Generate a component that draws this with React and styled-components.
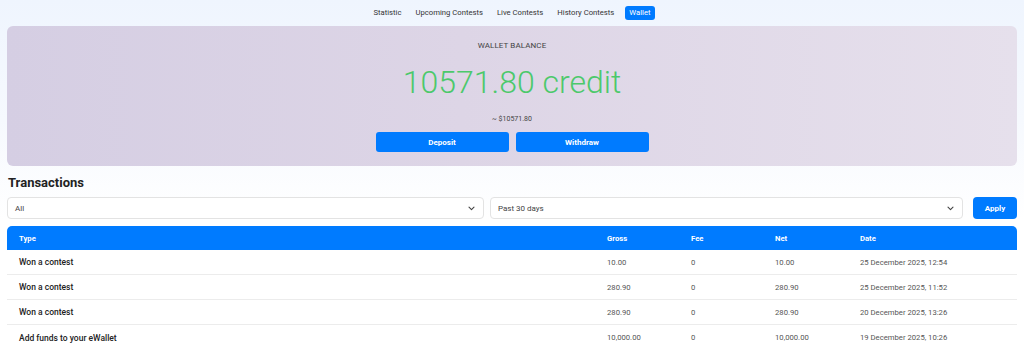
import React from "react";
import styled, { createGlobalStyle } from "styled-components";

const Global = createGlobalStyle`
  html, body { margin: 0; padding: 0; }
  body {
    font-family: Roboto, "Liberation Sans", Arial, sans-serif;
    background: linear-gradient(180deg, #eff5fe 0px, #f6f9fe 120px, #ffffff 220px);
    min-height: 357px;
    color: #222;
  }
`;

const Page = styled.div`
  padding: 0 7px;
`;

const Nav = styled.nav`
  display: flex;
  justify-content: center;
  align-items: center;
  gap: 14px;
  height: 26px;
  padding-left: 4px;
`;

const NavItem = styled.span`
  font-size: 7.7px;
  color: ${p => (p.$active ? "#fff" : "#333")};
  background: ${p => (p.$active ? "#007bff" : "transparent")};
  border-radius: 3px;
  padding: ${p => (p.$active ? "2px 4px" : "2px 0")};
  line-height: 10px;
  margin-left: ${p => (p.$active ? "-3px" : "0")};
`;

const Card = styled.section`
  height: 140px;
  box-sizing: border-box;
  border-radius: 6px;
  background: linear-gradient(90deg, #d5cee3 0%, #ddd5e6 45%, #e6e0ec 100%);
  display: flex;
  flex-direction: column;
  align-items: center;
  padding-top: 15px;
`;

const Label = styled.div`
  font-size: 8px;
  color: #444;
  letter-spacing: 0.1px;
  line-height: 10px;
`;

const Amount = styled.div`
  font-size: 32px;
  font-weight: 300;
  color: #4cc96b;
  line-height: 38px;
  margin-top: 12px;
`;

const Sub = styled.div`
  font-size: 7px;
  color: #444;
  margin-top: 14px;
  line-height: 9px;
`;

const Buttons = styled.div`
  display: flex;
  gap: 7px;
  margin-top: 8px;
`;

const BlueButton = styled.button`
  width: ${p => p.$w || "133px"};
  height: ${p => p.$h || "20px"};
  border: none;
  border-radius: ${p => p.$r || "3px"};
  background: #007bff;
  color: #fff;
  font-family: Roboto, "Liberation Sans", Arial, sans-serif;
  font-size: 8px;
  font-weight: 700;
  padding: 0;
  margin-left: ${p => p.$ml || "0"};
  flex-shrink: 0;
`;

const Title = styled.h2`
  font-size: 13px;
  font-weight: 700;
  margin: 0;
  padding: 9px 1px 0;
  line-height: 16px;
  color: #222;
`;

const Filters = styled.div`
  display: flex;
  align-items: center;
  gap: 6px;
  margin-top: 6px;
`;

const Select = styled.div`
  flex: ${p => p.$grow || 1};
  height: 22px;
  box-sizing: border-box;
  border: 1px solid #e3e3e3;
  border-radius: 4px;
  background: #fff;
  display: flex;
  align-items: center;
  justify-content: space-between;
  padding: 0 8px 0 7px;
  font-size: 8px;
  color: #444;
`;

const Table = styled.div`
  margin-top: 7px;
`;

const Row = styled.div`
  display: grid;
  grid-template-columns: 588px 84px 84px 85px 1fr;
  padding-left: 12px;
  align-items: center;
  height: ${p => (p.$head ? "24px" : "25px")};
  background: ${p => (p.$head ? "#007bff" : "#fff")};
  border-radius: ${p => (p.$head ? "5px 5px 0 0" : "0")};
  border-bottom: ${p => (p.$head || p.$last ? "none" : "1.5px solid #ececec")};
  box-sizing: border-box;
  font-size: 7.7px;
  color: ${p => (p.$head ? "#fff" : "#555")};
  font-weight: ${p => (p.$head ? 700 : 400)};
`;

const TypeCell = styled.span`
  font-size: 8.5px;
  font-weight: 500;
  color: #222;
`;

const Chevron = () => (
  <svg width="7" height="5" viewBox="0 0 7 5" fill="none">
    <path d="M1 1.2 3.5 3.7 6 1.2" stroke="#444" strokeWidth="1.1" strokeLinecap="round" strokeLinejoin="round" />
  </svg>
);

const rows = [
  ["Won a contest", "10.00", "0", "10.00", "25 December 2025, 12:54"],
  ["Won a contest", "280.90", "0", "280.90", "25 December 2025, 11:52"],
  ["Won a contest", "280.90", "0", "280.90", "20 December 2025, 13:26"],
  ["Add funds to your eWallet", "10,000.00", "0", "10,000.00", "19 December 2025, 10:26"],
];

export default function App() {
  return (
    <Page>
      <Global />
      <Nav>
        <NavItem>Statistic</NavItem>
        <NavItem>Upcoming Contests</NavItem>
        <NavItem>Live Contests</NavItem>
        <NavItem>History Contests</NavItem>
        <NavItem $active>Wallet</NavItem>
      </Nav>
      <Card>
        <Label>WALLET BALANCE</Label>
        <Amount>10571.80 credit</Amount>
        <Sub>~ $10571.80</Sub>
        <Buttons>
          <BlueButton>Deposit</BlueButton>
          <BlueButton>Withdraw</BlueButton>
        </Buttons>
      </Card>
      <Title>Transactions</Title>
      <Filters>
        <Select $grow={477}>
          <span>All</span>
          <Chevron />
        </Select>
        <Select $grow={473}>
          <span>Past 30 days</span>
          <Chevron />
        </Select>
        <BlueButton $w="44px" $h="22px" $r="4px" $ml="4px">Apply</BlueButton>
      </Filters>
      <Table>
        <Row $head>
          <span>Type</span>
          <span>Gross</span>
          <span>Fee</span>
          <span>Net</span>
          <span>Date</span>
        </Row>
        {rows.map((r, i) => (
          <Row key={i} $last={i === rows.length - 1}>
            <TypeCell>{r[0]}</TypeCell>
            <span>{r[1]}</span>
            <span>{r[2]}</span>
            <span>{r[3]}</span>
            <span>{r[4]}</span>
          </Row>
        ))}
      </Table>
    </Page>
  );
}
